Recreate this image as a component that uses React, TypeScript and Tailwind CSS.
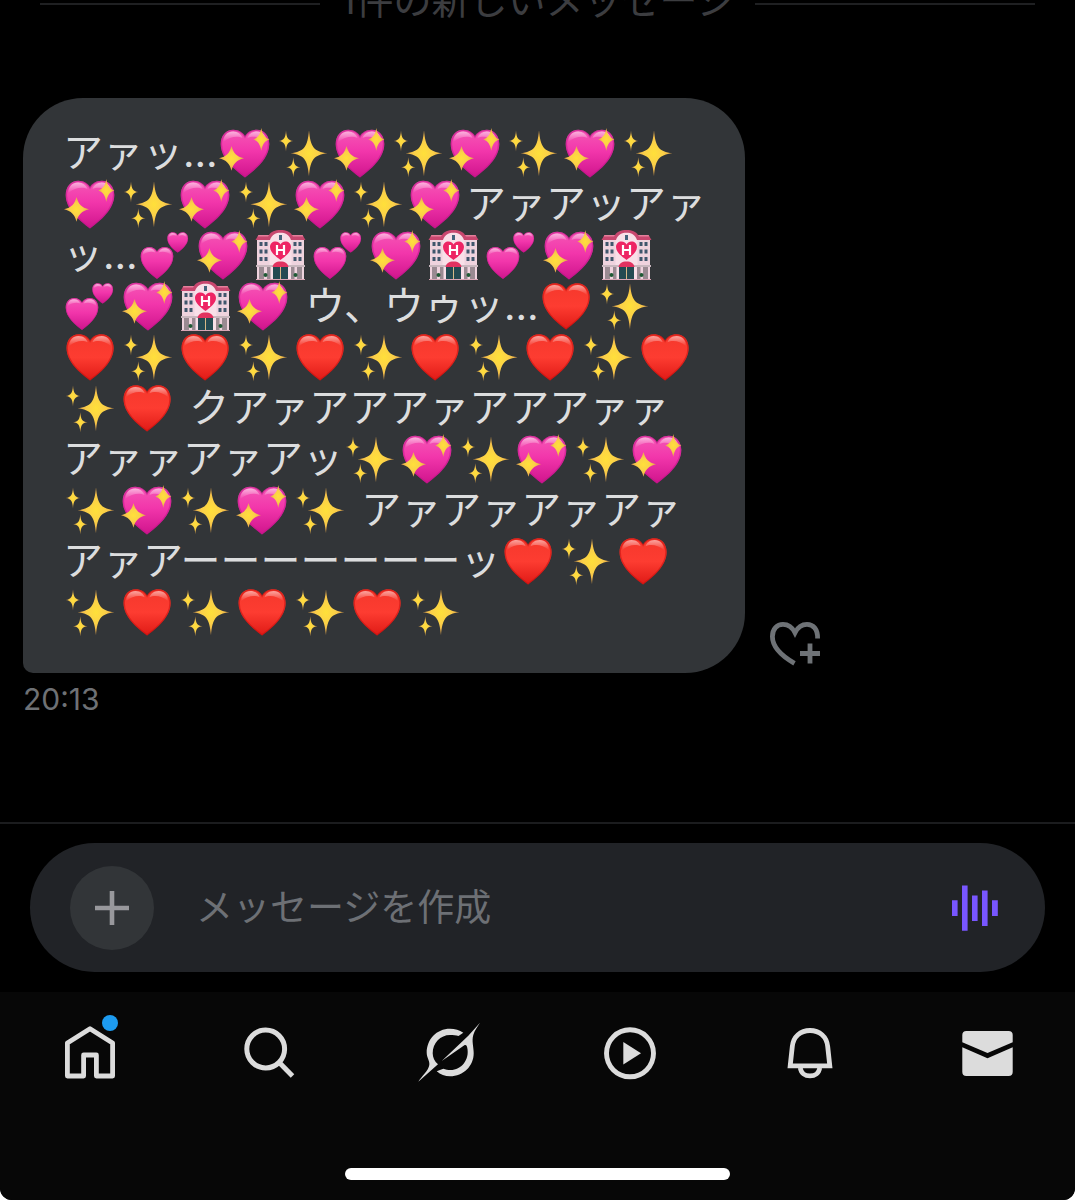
import { useState } from "react";
import type { ReactNode } from "react";

const HEART = "M27 50.4C17 43 2.7 31.5 2.7 17C2.7 8.5 8 2.7 15.2 2.7C20.5 2.7 25 5.5 27 9.5C29 5.5 33.5 2.7 38.8 2.7C46 2.7 51.3 8.5 51.3 17C51.3 31.5 37 43 27 50.4Z";
const STAR = "M0 -1C.08 -.26 .26 -.08 1 0C.26 .08 .08 .26 0 1C-.08 .26 -.26 .08 -1 0C-.26 -.08 -.08 -.26 0 -1Z";
const WIDE_STAR = "M0 -1C.16 -.4 .4 -.16 1 0C.4 .16 .16 .4 0 1C-.16 .4 -.4 .16 -1 0C-.4 -.16 -.16 -.4 0 -1Z";

// One string per line of the message
const messageLines = [
  "アァッ…💖✨💖✨💖✨💖✨",
  "💖✨💖✨💖✨💖アァアッアァ",
  "ッ…💕💖🏩💕💖🏩💕💖🏩",
  "💕💖🏩💖 ウ、ウゥッ…❤✨",
  "❤✨❤✨❤✨❤✨❤✨❤",
  "✨❤ クアァアアアァアアアァァ",
  "アァァアァアッ✨💖✨💖✨💖",
  "✨💖✨💖✨ アァアァアァアァ",
  "アァアーーーーーーーッ❤✨❤",
  "✨❤✨❤✨❤✨",
];

function Gradients() {
  return (
    <svg className="absolute size-0" aria-hidden="true">
      <defs>
        <linearGradient id="pink" x1="0" y1="0" x2="0" y2="1">
          <stop offset="0" stopColor="#f557b5" />
          <stop offset="0.45" stopColor="#f236ab" />
          <stop offset="1" stopColor="#cf148c" />
        </linearGradient>
        <linearGradient id="red" x1="0" y1="0" x2="0" y2="1">
          <stop offset="0" stopColor="#f5382c" />
          <stop offset="0.5" stopColor="#fd3c31" />
          <stop offset="1" stopColor="#df1a16" />
        </linearGradient>
        <linearGradient id="gloss" x1="0" y1="0" x2="0" y2="1">
          <stop offset="0" stopColor="#fff" stopOpacity="0.55" />
          <stop offset="1" stopColor="#fff" stopOpacity="0" />
        </linearGradient>
        <radialGradient id="gold">
          <stop offset="0" stopColor="#ffe03a" />
          <stop offset="0.5" stopColor="#fbd048" />
          <stop offset="1" stopColor="#e5a24c" />
        </radialGradient>
      </defs>
    </svg>
  );
}

function HeartShape({ fill, edge, transform }: { fill: string; edge: string; transform?: string }) {
  return (
    <g transform={transform}>
      <path d={HEART} fill={fill} />
      <path d={HEART} fill="none" stroke={edge} strokeWidth="1.4" opacity="0.55" transform="translate(.8 .8) scale(.97)" />
      <path d="M5.5 15C5.5 8.500 9.500 4.500 15 4.500C20 4.500 23.500 7.500 24.500 11C20 9 12 9 5.500 15Z" fill="url(#gloss)" />
      <path d="M29.500 11C30.500 7.500 34 4.500 39 4.500C44.500 4.500 48.500 8.500 48.500 15C42 9 34 9 29.500 11Z" fill="url(#gloss)" />
    </g>
  );
}

const emojis: Record<string, { label: string; className: string; art: ReactNode }> = {
  "💖": {
    label: "きらきらハート",
    className: "w-[58px]",
    art: (
      <>
        <HeartShape fill="url(#pink)" edge="#c0148a" />
        <path d={WIDE_STAR} transform="translate(13.5 31.3) scale(12.500 12.400)" fill="url(#gold)" />
        <path d={WIDE_STAR} transform="translate(43.3 12.5) scale(8 11.400)" fill="url(#gold)" />
      </>
    ),
  },
  "✨": {
    label: "きらきら",
    className: "w-[57px]",
    art: (
      <>
        <path d={STAR} transform="translate(33 26.3) scale(18.500 23)" fill="url(#gold)" />
        <path d={STAR} transform="translate(10 14) scale(7.200 10.500)" fill="url(#gold)" />
        <path d={STAR} transform="translate(17.3 40.3) scale(7.200 10)" fill="url(#gold)" />
      </>
    ),
  },
  "💕": {
    label: "ふたつのハート",
    className: "w-[58px]",
    art: (
      <>
        <HeartShape fill="url(#pink)" edge="#c0148a" transform="translate(.9 16.2) scale(.67)" />
        <HeartShape fill="url(#pink)" edge="#c0148a" transform="translate(28.2 2.2) scale(.425)" />
      </>
    ),
  },
  "❤": {
    label: "赤いハート",
    className: "w-[58px]",
    art: <HeartShape fill="url(#red)" edge="#c90f0c" transform="translate(.9 .6) scale(.97)" />,
  },
  "🏩": {
    label: "ホテル",
    className: "w-[57px]",
    art: (
      <>
        <path d="M3 9H50V50H3Z" fill="#efd3de" />
        <path d="M15.500 50V9C17 4 21 2 26.500 2S36 4 37.500 9V50Z" fill="#f8dfe8" />
        <path d="M1.500 11L4.500 6H15C17 2.500 21 1 26.500 1S36 2.500 38 6H48.500L51.500 11H37C35 5.500 31 3.800 26.500 3.800S18 5.500 16 11Z" fill="#c8476f" />
        <path d="M4.500 6H15L14 7.500H3.600ZM38 6H48.500L49.400 7.500H39Z" fill="#e4809c" />
        <path d="M25 6H28V11H25Z" fill="#44627c" />
        <path
          d="M5.500 13H8.500V17H5.500ZM10.500 13H13.500V17H10.500ZM5.500 20.500H8.500V24.500H5.500ZM10.500 20.500H13.500V24.500H10.500ZM5.500 28H8.500V32H5.500ZM10.500 28H13.500V32H10.500ZM39.500 13H42.500V17H39.500ZM44.500 13H47.500V17H44.500ZM39.500 20.500H42.500V24.500H39.500ZM44.500 20.500H47.500V24.500H44.500ZM39.500 28H42.500V32H39.500ZM44.500 28H47.500V32H44.500Z"
          fill="#3f566c"
        />
        <path d="M26.500 31C22 27.500 16 23.500 16 18C16 14.500 18.500 12.500 21.500 12.500C24 12.500 26 14 26.500 15.500C27 14 29 12.500 31.500 12.500C34.500 12.500 37 14.500 37 18C37 23.500 31 27.500 26.500 31Z" fill="#ee2464" />
        <path d="M23 16V26M30 16V26M23 21H30" stroke="#fff" strokeWidth="2.200" />
        <path d="M2 36H51V38H2Z" fill="#c9b8bf" />
        <path d="M5 38H10V50H5ZM13 38H16.500V50H13ZM37 38H40.500V50H37ZM43 38H48V50H43Z" fill="#9a8a92" />
        <path d="M19 38H34V50H19Z" fill="#244a52" />
        <path d="M26 38H27V50H26Z" fill="#d8b987" />
        <path d="M18.500 38C19 34.500 22 32.500 26.500 32.500S34 34.500 34.500 38Z" fill="#e23260" />
        <circle cx="11.500" cy="46" r="2" fill="#1f5a35" />
        <circle cx="41.500" cy="46" r="2" fill="#1f5a35" />
        <path d="M2 50H51V51H2Z" fill="#d9a5b5" />
      </>
    ),
  },
};

function MessageLine({ text }: { text: string }) {
  const parts = text.split(/(💖|✨|💕|❤|🏩)/u).filter((part) => part !== "");

  return (
    <span className="flex h-[51px] items-center whitespace-pre">
      {parts.map((part, index) => {
        const emoji = emojis[part];
        if (!emoji) return <span key={index}>{part}</span>;
        return (
          <svg
            key={index}
            role="img"
            aria-label={emoji.label}
            viewBox="0 0 58 52"
            preserveAspectRatio="xMinYMid slice"
            className={`h-[52px] shrink-0 overflow-visible ${emoji.className}`}
          >
            {emoji.art}
          </svg>
        );
      })}
    </span>
  );
}

const tabs = [
  {
    label: "ホーム",
    hasBadge: true,
    icon: (
      <path d="M30 6.700L52.600 21V54H36.400V33H23.600V54H7.400V21Z" fill="none" stroke="currentColor" strokeWidth="4.800" strokeLinejoin="round" />
    ),
  },
  {
    label: "検索",
    icon: (
      <g fill="none" stroke="currentColor" strokeWidth="5">
        <circle cx="25.700" cy="27" r="18.900" />
        <path d="M39 40.300L52.500 54" />
      </g>
    ),
  },
  {
    label: "Grok",
    icon: (
      <g fill="currentColor">
        <path d="M43.300 10.700C39.500 8 35 6.700 30 6.700C16.500 6.700 6.700 17.500 6.700 30.700C6.700 35.500 10 39 9.300 43C8.500 48.500 2 54 -1.700 59.700L18 42.300C14.500 39.500 12.700 35.500 12.700 31.300C12.700 21 20.500 13 30 13C33 13 36 13.400 38.500 14Z" />
        <path d="M60 .7L48.300 13.700L21.700 39L44 23.500C46 22.300 46.800 23.500 47.200 25.500C50 38 41 48 30.700 48C28 48 25.500 47.600 23.300 46.700L16.700 49.300C20.500 52.700 25 54.300 30 54.300C43.500 54.300 53.700 44 53.700 31.300C53.700 25 51.500 19 53.300 13C54.500 8.500 57.500 5 60 .7Z" />
      </g>
    ),
  },
  {
    label: "動画",
    icon: (
      <>
        <circle cx="30" cy="31.300" r="23.500" fill="none" stroke="currentColor" strokeWidth="4.900" />
        <path d="M23.300 20L41 31.300L23.300 42.500Z" fill="currentColor" />
      </>
    ),
  },
  {
    label: "通知",
    icon: (
      <g fill="none" stroke="currentColor" strokeWidth="4.800">
        <path d="M10.200 43.800L12.300 24.500C13.300 14.500 20.500 8.500 30 8.500S46.700 14.500 47.700 24.500L49.800 43.800Z" />
        <path d="M20.300 46C21 51 25 53.900 30 53.900S39 51 39.700 46" />
      </g>
    ),
  },
  {
    label: "メッセージ",
    icon: (
      <g fill="currentColor">
        <path d="M2.300 20.300V13C2.300 10.500 3.800 9 6.300 9H48.700C51.200 9 52.700 10.500 52.700 13V20.300L27.500 30.900Z" />
        <path d="M2.300 25.300L27.500 36.200L52.700 25.300V50C52.700 52.500 51.200 54 48.700 54H6.300C3.800 54 2.300 52.500 2.300 50Z" />
      </g>
    ),
  },
];

export default function App() {
  const [draft, setDraft] = useState("");

  return (
    <div className="bg-white">
      <div className="flex min-h-screen flex-col overflow-hidden rounded-b-xl bg-black font-['Inter','Noto_Sans_CJK_JP',sans-serif]">
        <Gradients />

        <main className="flex flex-1 flex-col">
          {/* New message divider, partly scrolled out of view */}
          <div className="flex h-[7px] items-center gap-5 px-10">
            <span className="h-[2px] flex-1 bg-[#1f2022]" />
            <h2 className="pb-2 text-[38px] leading-10 whitespace-nowrap text-[#3c3d40]">1件の新しいメッセージ</h2>
            <span className="h-[2px] flex-1 bg-[#1f2022]" />
          </div>

          <div className="mt-[91px] px-[23px]">
            <div className="flex items-end gap-[23px]">
              <p className="w-[722px] rounded-[60px] rounded-bl-[10px] bg-[#323538] pt-[29px] pr-8 pb-9 pl-10 text-[40px] leading-[51px] text-[#dcddde]">
                {messageLines.map((line, index) => (
                  <MessageLine key={index} text={line} />
                ))}
              </p>
              <button type="button" aria-label="リアクションを追加" className="mb-1 text-[#6e7276]">
                <svg viewBox="0 0 54 50" className="h-[50px] w-[54px]" fill="none" stroke="currentColor" strokeWidth="4.800">
                  <path d="M26.500 44.300C15.500 38 4.400 28.500 4.400 17.500C4.400 10 9 5.400 15 5.400C20.500 5.400 24.500 8.700 27 13.700C29.500 8.700 33.500 5.400 39 5.400C45.500 5.400 49.800 10.500 49.600 19.500" />
                  <path d="M42 24.500V44.500M32 34.500H52" />
                </svg>
              </button>
            </div>
            <time className="mt-[10px] block text-[30px] leading-8 text-[#6e7175]">20:13</time>
          </div>
        </main>

        <form className="border-t-2 border-[#1b1c1e] px-[30px] pt-[19px] pb-5" onSubmit={(event) => event.preventDefault()}>
          <div className="flex h-[129px] items-center rounded-full bg-[#212327] pr-[46px] pl-10">
            <button
              type="button"
              aria-label="添付"
              className="flex size-[84px] shrink-0 items-center justify-center rounded-full bg-[#323538] text-[#98989c]"
            >
              <svg viewBox="0 0 34 34" className="size-[34px]" stroke="currentColor" strokeWidth="4.600">
                <path d="M17 0V34M0 17H34" />
              </svg>
            </button>
            <input
              type="text"
              aria-label="メッセージを作成"
              placeholder="メッセージを作成"
              value={draft}
              onChange={(event) => setDraft(event.target.value)}
              className="ml-[42px] min-w-0 flex-1 bg-transparent text-[37px] leading-[54px] text-[#dcddde] outline-none placeholder:text-[#6d7075]"
            />
            <button type="button" aria-label="音声メッセージ" className="shrink-0 text-[#7856ff]">
              <svg viewBox="0 0 47 46" className="h-[46px] w-[47px]" fill="currentColor">
                <path d="M0 15.300H5.600V31H0ZM10 .5H15.600V45.800H10ZM20 10.500H25.600V36H20ZM30 5.500H35.600V41H30ZM40 15.300H45.800V31H40Z" />
              </svg>
            </button>
          </div>
        </form>

        <footer className="bg-[#070707] pt-[30px] pb-5">
          <nav className="flex justify-between pr-[55px] pl-[60px]">
            {tabs.map((tab) => (
              <a key={tab.label} href="#" aria-label={tab.label} className="relative text-[#dcdcdc]">
                <svg viewBox="0 0 60 60" className="size-[60px] overflow-visible">
                  {tab.icon}
                </svg>
                {tab.hasBadge && <span className="absolute -top-[7px] right-[2px] size-4 rounded-full bg-[#1d9bf0]" />}
              </a>
            ))}
          </nav>
          <div className="mx-auto mt-[86px] h-3 w-[385px] rounded-full bg-white" />
        </footer>
      </div>
    </div>
  );
}
